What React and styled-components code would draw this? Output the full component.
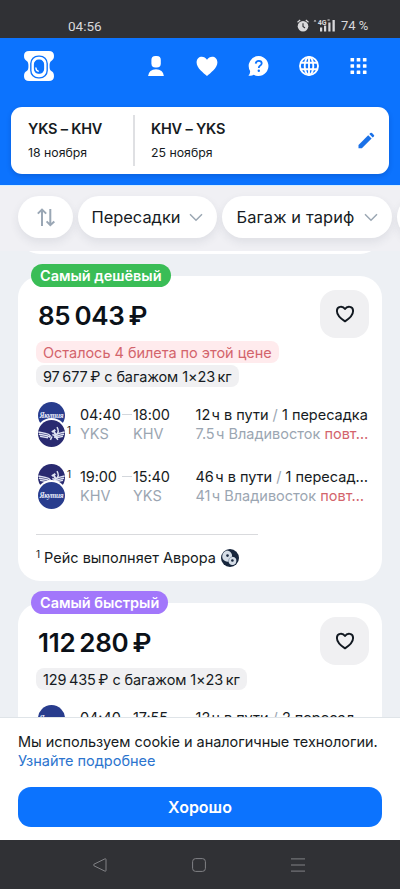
import React from "react";
import styled, { createGlobalStyle } from "styled-components";

const flights = [
  {
    id: 1,
    label: "Самый дешёвый",
    color: "#3abd56",
    price: "85\u2009043\u2009₽",
    warning: "Осталось 4 билета по этой цене",
    baggage: "97\u2009677\u2009₽ с багажом 1×23\u2009кг",
    legs: [
      {
        airlines: ["yakutia", "aurora"],
        depart: "04:40",
        arrive: "18:00",
        from: "YKS",
        to: "KHV",
        duration: "12\u200aч в пути",
        stops: "1 пересадка",
        layover: "7.5\u200aч Владивосток",
        repeat: "повт…",
      },
      {
        airlines: ["aurora", "yakutia"],
        depart: "19:00",
        arrive: "15:40",
        from: "KHV",
        to: "YKS",
        duration: "46\u200aч в пути",
        stops: "1 пересад…",
        layover: "41\u200aч Владивосток",
        repeat: "повт…",
      },
    ],
    operator: "Рейс выполняет Аврора",
  },
  {
    id: 2,
    label: "Самый быстрый",
    color: "#a277fb",
    price: "112\u2009280\u2009₽",
    baggage: "129\u2009435\u2009₽ с багажом 1×23\u2009кг",
    legs: [
      {
        airlines: ["yakutia"],
        depart: "04:40",
        arrive: "17:55",
        duration: "12\u200aч в пути",
        stops: "2 пересад…",
      },
    ],
  },
];

function Logo() {
  return (
    <svg width="30" height="30" viewBox="0 0 88 88">
      <path
        d="M15 0H73C83 0 88 6 88 14C88 23 85 26 80 29C76 32 75 36 75 44C75 52 76 56 80 59C85 62 88 65 88 74C88 82 83 88 73 88H15C5 88 0 82 0 74C0 65 3 62 8 59C12 56 13 52 13 44C13 36 12 32 8 29C3 26 0 23 0 14C0 6 5 0 15 0Z"
        fill="#fff"
      />
      <rect x="20" y="15" width="48" height="64" rx="22" fill="#fff" stroke="#0c73fe" strokeWidth="4" />
      <rect x="31" y="27" width="26" height="38" rx="12" fill="#0c73fe" stroke="#0c73fe" strokeWidth="4" />
      <path d="M35 50Q36 58 42 59" fill="none" stroke="#fff" strokeWidth="4" strokeLinecap="round" />
    </svg>
  );
}

function HeartOutline() {
  return (
    <svg width="20" height="20" viewBox="0 0 20 20">
      <path
        d="M10 17.4C7.2 15.5 1.9 11.6 1.9 6.9C1.9 2.2 7.7 1.5 10 5C12.3 1.5 18.1 2.2 18.1 6.9C18.1 11.6 12.8 15.5 10 17.4Z"
        fill="none"
        stroke="#111820"
        strokeWidth="1.9"
        strokeLinejoin="round"
      />
    </svg>
  );
}

function Chevron() {
  return (
    <svg width="14" height="9" viewBox="0 0 14 9">
      <path d="M1 1.2L7 7.2L13 1.2" fill="none" stroke="#9ba7b3" strokeWidth="1.5" />
    </svg>
  );
}

function YakutiaMark() {
  return (
    <svg width="27" height="27" viewBox="0 0 27 27">
      <circle cx="13.5" cy="13.5" r="13.5" fill="#283c8d" />
      <text
        x="13.5"
        y="15.8"
        fill="#e8ecfa"
        fontSize="7.4"
        fontStyle="italic"
        fontWeight="700"
        fontFamily="'Liberation Serif', serif"
        textAnchor="middle"
        textLength="24"
      >
        Якутия
      </text>
    </svg>
  );
}

function AuroraMark() {
  return (
    <svg width="27" height="27" viewBox="0 0 27 27">
      <circle cx="13.5" cy="13.5" r="13.5" fill="#292a70" />
      <g fill="none" stroke="#dfe3f2">
        <path d="M0.4 12L8.5 13.6Q11 14 12.8 16.4M.9 14.2L9 15.6L12.4 17.4M2 16.4L10 17.8" strokeWidth="1.4" />
        <path d="M26.6 12L21 13.4Q18 14 16.5 16.4M26 14.2L20 15.6L16 17.4M25 16.4L18 17.8" strokeWidth="1.4" />
        <path d="M19 7.2Q22 12.4 18 14.8Q16 15.8 14.4 14.4M14 16.5L12.4 19.8M17 16.5L20 19.8" strokeWidth="1.5" />
        <path d="M13.8 12L17.4 9.8M15.6 11L18 15.2" strokeWidth="2" />
      </g>
    </svg>
  );
}

// small yin-yang style round mark next to the operator name
function OperatorMark() {
  return (
    <svg width="18" height="18" viewBox="0 0 18 18">
      <circle cx="9" cy="9" r="9" fill="#17263d" />
      <path d="M5.8 1.4C10 2 11.5 5 11 7.8C14.8 7.8 16.5 11 14.7 14.4C12 17.3 8 16.4 7.5 12.6C3 13 .2 9.5 1.6 5.5C2.3 3.6 3.7 2 5.8 1.4Z" fill="#d5dde7" />
      <path d="M11 7.8C8.8 8.5 7.4 10 7.5 12.6" fill="none" stroke="#8393a8" strokeWidth=".8" />
      <circle cx="6.5" cy="6.6" r="1.3" fill="#17263d" />
      <circle cx="11.4" cy="11.5" r="1.3" fill="#17263d" />
    </svg>
  );
}

function StatusIcons() {
  return (
    <svg width="39" height="16" viewBox="0 0 39 16" fill="#d9d9db">
      <circle cx="6" cy="8.3" r="5.3" />
      <path d="M.5 4.3L3.2 2M11.5 4.3L8.8 2" stroke="#d9d9db" strokeWidth="1.2" />
      <path d="M6 5.2V8.5L8 10" fill="none" stroke="#303135" strokeWidth="1.1" />
      <path d="M16.6 3.4L18 1.8L19.4 3.4Z" />
      <rect x="23" y="9.5" width="2.2" height="4" />
      <rect x="27" y="7.6" width="2.2" height="5.9" />
      <rect x="31.3" y="4.5" width="2.2" height="9" />
      <rect x="35.5" y="2" width="2.3" height="11.5" />
      <text x="20.8" y="6.8" fontFamily="Roboto, sans-serif" fontSize="7" fontWeight="700">
        4G
      </text>
      <path d="M30.5 2H32.7" stroke="#d9d9db" strokeWidth="1" />
    </svg>
  );
}

function Leg({ leg }) {
  return (
    <LegRow>
      <Airlines>
        {leg.airlines.map((name) => (
          <AirlineMark key={name}>
            {name === "yakutia" ? <YakutiaMark /> : <AuroraMark />}
          </AirlineMark>
        ))}
      </Airlines>
      <Footnote $low={leg.airlines[1] === "aurora"}>
        {leg.airlines.length > 1 && "1"}
      </Footnote>
      <Times>
        <Time>{leg.depart}</Time>
        <Dash />
        <Time>{leg.arrive}</Time>
        {leg.from && (
          <>
            <Code>{leg.from}</Code>
            <span />
            <Code>{leg.to}</Code>
          </>
        )}
      </Times>
      <Details>
        <Duration>
          {leg.duration} <Muted>/</Muted> {leg.stops}
        </Duration>
        {leg.layover && (
          <Layover>
            {leg.layover} <Repeat>{leg.repeat}</Repeat>
          </Layover>
        )}
      </Details>
    </LegRow>
  );
}

function TicketCard({ flight }) {
  return (
    <Card>
      <Badge $color={flight.color}>{flight.label}</Badge>
      <CardTop>
        <Price>{flight.price}</Price>
        <LikeButton>
          <HeartOutline />
        </LikeButton>
      </CardTop>
      <Tags>
        {flight.warning && <Tag $warning>{flight.warning}</Tag>}
        <Tag>{flight.baggage}</Tag>
      </Tags>
      <Legs>
        {flight.legs.map((leg) => (
          <Leg key={leg.depart} leg={leg} />
        ))}
      </Legs>
      {flight.operator && (
        <Operator>
          <sup>1</sup>
          <span>{flight.operator}</span>
          <OperatorMark />
        </Operator>
      )}
    </Card>
  );
}

function App() {
  return (
    <>
      <GlobalStyle />
      <Screen>
        <StatusBar>
          <Clock>04:56</Clock>
          <StatusIcons />
          <Battery>74 %</Battery>
        </StatusBar>
        <Header>
          <NavRow>
            <Logo />
            <NavIcons>
              <svg width="20" height="20" viewBox="0 0 20 20" fill="#fff">
                <rect x="5.4" y="0" width="9.4" height="11.6" rx="4" />
                <path d="M2.1 20Q3 13.2 10 13.2Q17 13.2 17.9 20Z" />
              </svg>
              <svg width="22" height="20" viewBox="0 0 22 20" fill="#fff">
                <path d="M11 20C7.5 17 .6 12 .6 6.5C.6-.2 8.2-1.2 11 3.8C13.8-1.2 21.4-.2 21.4 6.5C21.4 12 14.5 17 11 20Z" />
              </svg>
              <svg width="21" height="21" viewBox="0 0 21 21">
                <path d="M10.8 0A10 10 0 1 1 5.7 18.8Q3.5 20.4.4 19.6Q2.3 17.8 2.1 15A10 10 0 0 1 10.8 0Z" fill="#fff" />
                <path d="M7.7 7.6Q8 4.8 10.8 4.8Q13.7 4.8 13.7 7.3Q13.7 8.8 12 9.7Q10.8 10.4 10.8 12" fill="none" stroke="#0c73fe" strokeWidth="1.8" />
                <circle cx="10.8" cy="14.7" r="1.2" fill="#0c73fe" />
              </svg>
              <svg width="20" height="20" viewBox="0 0 20 20" fill="none" stroke="#fff" strokeWidth="1.9">
                <circle cx="10" cy="10" r="9" />
                <ellipse cx="10" cy="10" rx="4.3" ry="9" />
                <path d="M10 1V19M1.8 6.8H18.2M1.8 13.2H18.2" />
              </svg>
              <svg width="18" height="16" viewBox="0 0 18 16" fill="#fff">
                {[0, 6.2, 12.4].map((y) =>
                  [1.5, 7.7, 13.9].map((x) => (
                    <rect key={`${x}-${y}`} x={x} y={y} width="3.6" height="3.6" rx=".5" />
                  ))
                )}
              </svg>
            </NavIcons>
          </NavRow>
          <TripCard>
            <Trip>
              <Route>YKS – KHV</Route>
              <TripDate>18 ноября</TripDate>
            </Trip>
            <TripDivider />
            <Trip>
              <Route>KHV – YKS</Route>
              <TripDate>25 ноября</TripDate>
            </Trip>
            <svg width="17" height="17" viewBox="0 0 17 17" fill="#1a71e8">
              <path d="M.5 12.9L10.2 3.2L13.6 6.6L3.9 16.3H.5Z" />
              <path d="M11.3 2.1L12.4 1Q13.2.3 14 1L15.9 2.9Q16.6 3.7 15.9 4.4L14.7 5.5Z" />
            </svg>
          </TripCard>
        </Header>
        <Filters>
          <Pill $width={55}>
            <svg width="18" height="19" viewBox="0 0 18 19" fill="none" stroke="#9aa7b5" strokeWidth="2">
              <path d="M5 18V2M.8 5.6L5 1.6L9.2 5.6M13.3 1V17M9.6 13.4L13.3 17.2L17.3 13.4" />
            </svg>
          </Pill>
          <Pill $width={139}>
            Пересадки <Chevron />
          </Pill>
          <Pill $width={170} $spacing={0.15}>
            Багаж и тариф <Chevron />
          </Pill>
          <Pill $width={90} />
        </Filters>
        <Results>
          <PreviousTicket />
          {flights.map((flight) => (
            <TicketCard key={flight.id} flight={flight} />
          ))}
        </Results>
        <CookieBanner>
          <CookieText>Мы используем cookie и аналогичные технологии.</CookieText>
          <CookieLink>Узнайте подробнее</CookieLink>
          <AcceptButton>Хорошо</AcceptButton>
        </CookieBanner>
        <SystemNav>
          <svg width="14" height="14" viewBox="0 0 14 14">
            <path d="M1 6.2L12 .8Q13 .5 13 1.6V12.4Q13 13.5 12 13.2L1 7.8Q0 7 1 6.2Z" />
          </svg>
          <svg width="14" height="14" viewBox="0 0 14 14">
            <rect x=".6" y=".6" width="12.8" height="12.8" rx="3" />
          </svg>
          <svg width="14" height="14" viewBox="0 0 14 14">
            <path d="M0 .9H14M0 7H14M0 13.1H14" />
          </svg>
        </SystemNav>
      </Screen>
    </>
  );
}

export default App;

const GlobalStyle = createGlobalStyle`
  * {
    box-sizing: border-box;
  }

  body {
    margin: 0;
    font-family: Inter, "Noto Sans", sans-serif;
    color: #161b22;
  }

  svg {
    display: block;
    flex-shrink: 0;
  }
`;

const Screen = styled.div`
  display: flex;
  flex-direction: column;
  width: 400px;
  height: 889px;
  overflow: hidden;
  background: #edf0f4;
`;

const StatusBar = styled.div`
  display: flex;
  align-items: center;
  height: 38px;
  padding: 13px 31px 0 68px;
  background: #303135;
  color: #d9d9db;
  font-family: Roboto, sans-serif;
  font-size: 13.5px;
  line-height: 26px;
`;

const Clock = styled.span`
  flex: 1;
`;

const Battery = styled.span`
  width: 28px;
  margin-left: 5px;
  font-size: 13px;
  white-space: nowrap;
`;

const Header = styled.header`
  height: 147px;
  padding: 0 11px;
  background: #0c73fe;
`;

const NavRow = styled.nav`
  display: flex;
  align-items: center;
  justify-content: space-between;
  height: 56px;
  margin-bottom: 13px;
  padding: 0 22px 0 13px;
`;

const NavIcons = styled.div`
  display: flex;
  align-items: center;
  justify-content: space-between;
  width: 221px;
`;

const TripCard = styled.div`
  display: flex;
  align-items: center;
  height: 67px;
  padding: 0 14px 0 17px;
  border-radius: 11px;
  background: #fff;
  box-shadow: 0 2px 5px rgba(0, 30, 90, 0.2);

  > svg {
    margin-left: auto;
  }
`;

const Trip = styled.div`
  width: 105px;
`;

const TripDivider = styled.div`
  width: 2px;
  height: 51px;
  margin-right: 16px;
  background: #dfe0e3;
`;

const Route = styled.div`
  font-size: 14.5px;
  font-weight: 600;
  line-height: 20px;
  letter-spacing: -0.2px;
`;

const TripDate = styled.div`
  margin-top: 5px;
  font-size: 12.3px;
  line-height: 18px;
`;

const Filters = styled.div`
  display: flex;
  gap: 5px;
  height: 66px;
  padding: 10px 0 0 18px;
  border-top: 1px solid #d5efff;
  overflow: hidden;
  background: #f0f0f4;
`;

const Pill = styled.div`
  display: flex;
  flex-shrink: 0;
  align-items: center;
  justify-content: center;
  gap: 9px;
  width: ${(props) => props.$width}px;
  height: 42px;
  border-radius: 21px;
  background: #fff;
  box-shadow: 0 4px 10px rgba(40, 50, 80, 0.09);
  font-size: 16.4px;
  letter-spacing: ${(props) => props.$spacing || 0}px;
  white-space: nowrap;
`;

const Results = styled.main`
  display: flex;
  flex: 1;
  flex-direction: column;
  gap: 22px;
  min-height: 0;
  padding: 0 18px;
  overflow: hidden;
`;

// tail of the ticket scrolled under the filters
const PreviousTicket = styled.div`
  display: flex;
  flex-shrink: 0;
  align-items: flex-end;
  height: 3px;
  overflow: hidden;

  &::after {
    content: "";
    flex: 1;
    height: 44px;
    border-radius: 22px;
    background: #fff;
  }
`;

const Card = styled.article`
  position: relative;
  flex-shrink: 0;
  height: 305px;
  padding: 14px 13px 0 18px;
  border-radius: 22px;
  background: #fff;
`;

const Badge = styled.div`
  position: absolute;
  top: -12px;
  left: 13px;
  height: 23px;
  padding: 0 9px;
  border-radius: 12px;
  background: ${(props) => props.$color};
  color: #fff;
  font-size: 14.5px;
  font-weight: 600;
  line-height: 24px;
  letter-spacing: -0.03px;
  white-space: nowrap;
`;

const CardTop = styled.div`
  display: flex;
  justify-content: space-between;
  height: 51px;
`;

const Price = styled.div`
  padding: 10px 0 0 2px;
  font-size: 26px;
  font-weight: 600;
  line-height: 32px;
  letter-spacing: -0.3px;
  color: #0b1118;
`;

const LikeButton = styled.div`
  display: flex;
  align-items: center;
  justify-content: center;
  width: 49px;
  height: 48px;
  border-radius: 16px;
  background: #f0f0f2;
`;

const Tags = styled.div`
  display: flex;
  flex-direction: column;
  align-items: flex-start;
  gap: 2px;
`;

const Tag = styled.div`
  height: 22px;
  padding: 0 7px;
  border-radius: 8px;
  background: ${(props) => (props.$warning ? "#ffebed" : "#f0f0f2")};
  color: ${(props) => (props.$warning ? "#d3646c" : "#161b22")};
  font-size: 14.5px;
  line-height: 23px;
  letter-spacing: ${(props) => (props.$warning ? "-0.03px" : "-0.1px")};
  white-space: nowrap;
`;

const Legs = styled.div`
  display: flex;
  flex-direction: column;
  gap: 17px;
  padding-top: 15px;
`;

const LegRow = styled.div`
  display: flex;
  height: 45px;
`;

const Airlines = styled.div`
  display: flex;
  flex-direction: column;
  width: 32px;
`;

const AirlineMark = styled.div`
  width: 31px;
  height: 31px;
  border: 2px solid #fff;
  border-radius: 50%;
  background: #fff;

  &:first-child {
    margin-top: -2px;
  }

  & + & {
    margin-top: -13px;
  }
`;

const Footnote = styled.span`
  width: 11px;
  margin-top: ${(props) => (props.$low ? "22px" : "4px")};
  margin-left: -1px;
  font-size: 10px;
  line-height: 12px;
`;

const Times = styled.div`
  display: grid;
  grid-template-columns: 40px 13px 62.5px;
  grid-template-rows: 19px 19px;
  padding-top: 3px;
  margin-left: 2px;
`;

const Time = styled.span`
  font-size: 14.5px;
  line-height: 19px;
  letter-spacing: -0.1px;
`;

const Dash = styled.span`
  height: 1px;
  margin: 9px 1px 0 2px;
  background: #d3d7dc;
`;

const Code = styled.span`
  color: #9ba6b2;
  font-size: 14.5px;
  line-height: 19px;
`;

const Details = styled.div`
  padding-top: 3px;
  white-space: nowrap;
`;

const Duration = styled.div`
  font-size: 14.5px;
  line-height: 19px;
`;

const Layover = styled.div`
  color: #9ba6b2;
  font-size: 14.5px;
  line-height: 19px;
`;

const Muted = styled.span`
  color: #9ba6b2;
`;

const Repeat = styled.span`
  color: #d3646c;
`;

const Operator = styled.div`
  display: flex;
  align-items: center;
  margin-top: 25px;
  padding-top: 15px;
  font-size: 14.5px;
  line-height: 18px;
  position: relative;

  &::before {
    content: "";
    position: absolute;
    top: 0;
    left: 0;
    width: 222px;
    height: 1px;
    background: #d9dadd;
  }

  sup {
    margin-right: 4px;
    padding-bottom: 8px;
    font-size: 10px;
    line-height: 10px;
  }

  svg {
    margin-left: 5px;
  }
`;

const CookieBanner = styled.div`
  flex-shrink: 0;
  height: 123px;
  padding: 14px 18px 0;
  border-top: 1px solid #dfe4e8;
  background: #fff;
`;

const CookieText = styled.div`
  font-size: 14.5px;
  line-height: 19px;
  letter-spacing: -0.03px;
  white-space: nowrap;
`;

const CookieLink = styled.div`
  color: #2b74ce;
  font-size: 14.5px;
  line-height: 19px;
`;

const AcceptButton = styled.div`
  height: 40px;
  margin-top: 17px;
  border-radius: 13px;
  background: #0c73fe;
  color: #fff;
  font-size: 16px;
  font-weight: 600;
  line-height: 41px;
  text-align: center;
`;

const SystemNav = styled.div`
  display: flex;
  flex-shrink: 0;
  align-items: center;
  justify-content: space-between;
  height: 49px;
  padding: 0 95px 0 93px;
  background: #303135;

  svg {
    fill: none;
    stroke: #818286;
    stroke-width: 1;
  }
`;
